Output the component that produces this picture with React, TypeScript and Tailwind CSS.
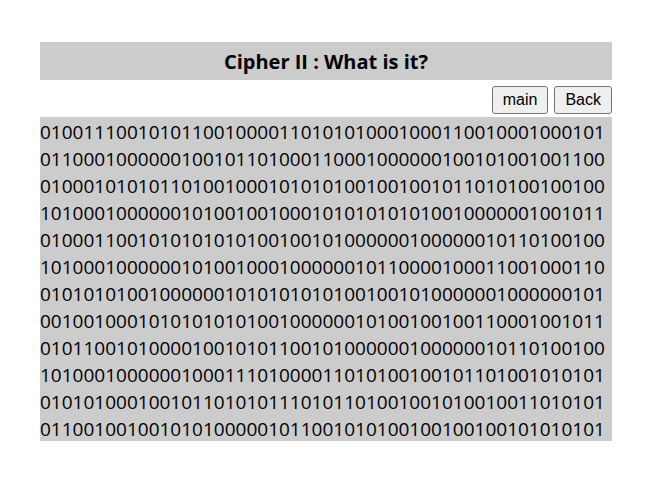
const cipherLines = [
  "0100111001010110010000110101010001000110010001000101",
  "0110001000000100101101000110001000000100101001001100",
  "0100010101011010010001010101001001001011010100100100",
  "1010001000000101001001000101010101010010000001001011",
  "0100011001010101010100100101000000100000010110100100",
  "1010001000000101001000100000010110000100011001000110",
  "0101010100100000010101010101001001010000001000000101",
  "0010010001010101010100100000010100100100110001001011",
  "0101100101000010010101100101000000100000010110100100",
  "1010001000000100011101000011010100100101101001010101",
  "0101010001001011010101110101101001001010010011010101",
  "0110010010010101000001011001010100100100100101010101",
];

const buttonClass =
  "h-7 px-2.5 rounded-[3px] border border-[#767676] bg-[#efefef] font-['Liberation_Sans',sans-serif] text-base leading-6 text-black hover:bg-[#e5e5e5]";

export default function App() {
  return (
    <main className="min-h-screen bg-white pt-[42px] pb-10 pl-10 pr-[52px] font-['Open_Sans',sans-serif] text-[19px] text-black">
      <h1 className="bg-[#cccccc] pt-0.5 text-center text-xl leading-9 font-bold">
        Cipher II : What is it?
      </h1>

      {/* Navigation */}
      <div className="flex justify-end gap-1.5 pt-1.5 pb-[3px]">
        <button type="button" className={buttonClass}>
          main
        </button>
        <button type="button" className={buttonClass}>
          Back
        </button>
      </div>

      {/* Cipher text */}
      <div className="bg-[#cccccc] leading-[23px] whitespace-nowrap">
        {cipherLines.map((line, i) => (
          <p key={i} className="pt-1">
            {line}
          </p>
        ))}
      </div>
    </main>
  );
}
